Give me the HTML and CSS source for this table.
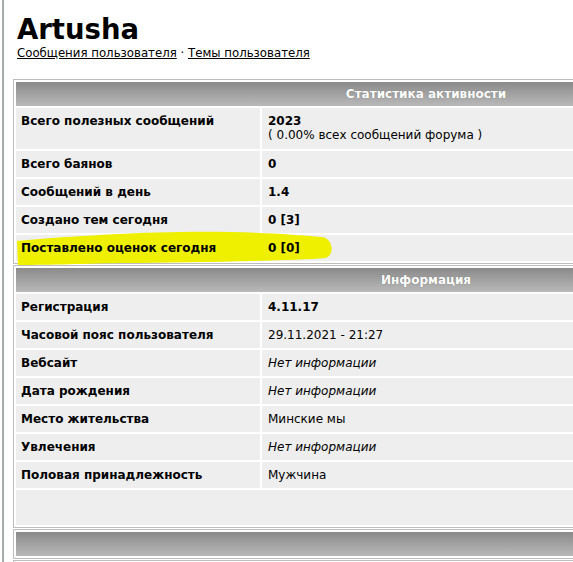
FILE: index.html
```html
<!DOCTYPE html>
<html lang="ru">
<head>
<meta charset="utf-8">
<title>Artusha</title>
<link rel="stylesheet" href="styles.css">
</head>
<body>
<div class="page">
  <h1 class="title">Artusha</h1>
  <div class="links"><a href="#">Сообщения пользователя</a> · <a href="#">Темы пользователя</a></div>
  <div class="tables">
    <table class="box">
      <colgroup><col class="c1"><col></colgroup>
      <tr><th colspan="2">Статистика активности</th></tr>
      <tr><td class="label first">Всего полезных сообщений</td><td class="value first"><b>2023</b><br>( 0.00% всех сообщений форума )</td></tr>
      <tr><td class="label">Всего баянов</td><td class="value"><b>0</b></td></tr>
      <tr><td class="label">Сообщений в день</td><td class="value"><b>1.4</b></td></tr>
      <tr><td class="label">Создано тем сегодня</td><td class="value"><b>0 [3]</b></td></tr>
      <tr><td class="label"><span class="over">Поставлено оценок сегодня</span></td><td class="value"><b class="over">0 [0]</b></td></tr>
    </table>
    <table class="box">
      <colgroup><col class="c1"><col></colgroup>
      <tr><th colspan="2">Информация</th></tr>
      <tr><td class="label">Регистрация</td><td class="value"><b>4.11.17</b></td></tr>
      <tr><td class="label">Часовой пояс пользователя</td><td class="value">29.11.2021 - 21:27</td></tr>
      <tr><td class="label">Вебсайт</td><td class="value"><i>Нет информации</i></td></tr>
      <tr><td class="label">Дата рождения</td><td class="value"><i>Нет информации</i></td></tr>
      <tr><td class="label">Место жительства</td><td class="value">Минские мы</td></tr>
      <tr><td class="label">Увлечения</td><td class="value"><i>Нет информации</i></td></tr>
      <tr><td class="label">Половая принадлежность</td><td class="value">Мужчина</td></tr>
      <tr><td class="empty" colspan="2"></td></tr>
    </table>
    <table class="box">
      <tr><th>&nbsp;</th></tr>
    </table>
    <table class="box">
      <tr><th>&nbsp;</th></tr>
    </table>
    <svg class="marker" width="322" height="37" viewBox="0 0 322 37" aria-hidden="true">
      <path d="M2,11 C45,7 105,3 165,2 C225,1 275,4 307,7 C318,9 320,24 311,28 C275,31 185,32 105,33 C65,34 25,35 3,35 Z" fill="#eef000"/>
    </svg>
  </div>
</div>
</body>
</html>
```

FILE: styles.css
```css
html {
  overflow: hidden;
}
body {
  margin: 0;
  background: #fff;
  font-family: "DejaVu Sans", Verdana, sans-serif;
  font-size: 12px;
  color: #000;
}
.page {
  margin-left: 2px;
  border-left: 2px solid #a5aeac;
  padding: 13px 0 0 9px;
  min-height: 600px;
}
.title {
  margin: 0 0 0 4px;
  font-size: 27.5px;
  line-height: 32px;
  font-weight: bold;
}
.links {
  margin: 1px 0 0 4px;
  line-height: 14px;
  font-size: 11.75px;
}
.links a {
  color: #000;
  text-decoration: underline;
}
.tables {
  margin-top: 19px;
  overflow: hidden;
  position: relative;
}
.box {
  width: 826px;
  table-layout: fixed;
  border: 1px solid #bdbdbd;
  border-spacing: 2px;
  margin-bottom: 1px;
  background: #fff;
}
.c1 {
  width: 244px;
}
.box th {
  padding: 5px 6px;
  line-height: 14px;
  color: #fff;
  font-weight: bold;
  text-align: center;
  background: linear-gradient(#8a8a8a, #b9b9b9);
  text-shadow: 0 0 1px rgba(0, 0, 0, 0.3);
}
.box td {
  background: #eeeeee;
  padding: 6px 5px;
  line-height: 14px;
  vertical-align: top;
}
.label {
  font-weight: bold;
}
.box td.value {
  padding-left: 6px;
}
.box td.first {
  padding-bottom: 7px;
}
.box td.empty {
  height: 35px;
  padding: 0;
}
.over {
  position: relative;
  z-index: 2;
}
.marker {
  position: absolute;
  left: 2px;
  top: 151px;
  z-index: 1;
}
```
